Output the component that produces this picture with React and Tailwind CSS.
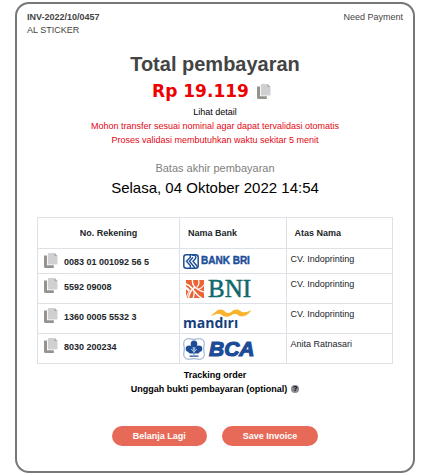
import React from "react";

function CopyIcon() {
  return (
    <svg viewBox="0 0 14 15" className="block h-[15px] w-[14px]" aria-hidden="true">
      <path d="M0 2.500h3v9.800H9.800V15H1.500A1.500 1.500 0 0 1 0 13.500z" fill="#96938e" />
      <path d="M4.800 0H10.500L13.500 3v7.500a1 1 0 0 1-1 1H4.800a1 1 0 0 1-1-1V1a1 1 0 0 1 1-1z" fill="#d0d0d3" />
      <path d="M10.500 0v3h3z" fill="#a9a9ad" />
    </svg>
  );
}

function BriLogo() {
  return (
    <span className="flex items-center gap-[2px] pl-[3px] text-[#1d4f98]">
      <svg viewBox="0 0 16 15" className="h-[15px] w-4" fill="none" stroke="#1d4f98" aria-hidden="true">
        <rect x="0.8" y="0.8" width="14.400" height="13.400" rx="2.500" strokeWidth="1.500" />
        <path d="M7.300 1v2.200L3.500 7.300l3.800 4.200V14" strokeWidth="1.400" />
        <path d="M10 3.300 6.500 7.300 12 14" strokeWidth="1.400" />
        <path d="M9 1c4 0 4.300 2 3.500 3.500L10 7.300l4.500 5.500" strokeWidth="1.400" />
      </svg>
      <span className="text-[10px] leading-4 font-bold whitespace-nowrap [-webkit-text-stroke:0.4px_#1d4f98]">
        BANK BRI
      </span>
    </span>
  );
}

function BniLogo() {
  return (
    <span className="flex items-center gap-[3px] pl-[5px]">
      <svg viewBox="0 0 20 18" className="h-[18px] w-5" aria-hidden="true">
        <path d="M1 0h18v18H1z" fill="#ea6437" />
        <g fill="none" stroke="#fff" strokeLinecap="round">
          <path d="M.5 4C4 4.500 5.500 6.500 7.500 9s4.500 6.500 9.500 9.500" strokeWidth="1.500" />
          <path d="M7.500 0C7 4 9.500 7.500 13 9.500s5 2.500 6.500 2.500" strokeWidth="1.400" />
          <path d="M9.500 7.500C7 9 4.500 12 3.500 18" strokeWidth="1.500" />
          <path d="M13.500 0c1 2.500.5 5-1.500 7" strokeWidth="1.200" />
          <path d="M9 11.500c.5 2.500 0 4.500-1 6.500" strokeWidth="1.200" />
          <path d="M13 9c2 .3 4-1.500 6-4" strokeWidth="1.200" />
        </g>
        <path d="M0 6c2.500 1 4 2.500 5 4.500-1.500 2-2.500 4.500-3 7.500H0z" fill="#fff" />
        <path d="M1 9.500c1.200.5 2 1.200 2.500 2.200C2.500 13 1.500 15 1 17z" fill="#ea6437" />
      </svg>
      <span className="font-['Liberation_Serif',serif] text-[25px] leading-[22px] text-[#10696c] [-webkit-text-stroke:0.5px_#10696c]">
        BNI
      </span>
    </span>
  );
}

function MandiriLogo() {
  return (
    <span className="flex flex-col pl-[3px]">
      <svg viewBox="0 0 42 8" className="ml-[27px] h-2 w-[42px]" aria-hidden="true">
        <path
          d="M0 6.500C4 5.500 6 .5 10.500.5c4 0 4.500 3.500 7.500 3.500 3.500 0 4.500-3.500 8.500-3.500 4 0 4 2.800 7.500 2.800 2.500 0 4.500-1 7.500-2.300C39 4.500 36 7.300 32 7.300c-4 0-4-2.300-7-2.300-3.500 0-4.500 2.800-8.500 2.800-4.500 0-4.500-3-8-3C5.500 4.800 3.500 7 0 6.500z"
          fill="#f8b42c"
        />
      </svg>
      <span className="font-['Open_Sans','Noto_Sans',sans-serif] text-[14px] leading-3 font-bold text-[#173f7e]">
        mandırı
      </span>
    </span>
  );
}

function BcaLogo() {
  return (
    <span className="flex items-center gap-1 pl-[3px]">
      <svg viewBox="0 0 22 22" className="h-[22px] w-[22px]" aria-hidden="true">
        <path
          d="M5.500.7Q11 2 16.500.7q4.500 0 4.800 4.800Q20 11 21.300 16.500q-.3 4.500-4.800 4.800Q11 20 5.500 21.300 1 21 .7 16.500 2 11 .7 5.500 1 .7 5.500.7z"
          fill="#fff"
          stroke="#7d9ac6"
          strokeWidth="0.9"
        />
        <g fill="#1c4c98">
          <ellipse cx="11" cy="6" rx="3.300" ry="3.500" />
          <ellipse cx="6.300" cy="10.800" rx="3.600" ry="3.200" />
          <ellipse cx="15.700" cy="10.800" rx="3.600" ry="3.200" />
          <ellipse cx="8.300" cy="13.800" rx="3" ry="1.800" />
          <ellipse cx="13.700" cy="13.800" rx="3" ry="1.800" />
          <path d="M10.400 8h1.200v8.500h-1.200zM6.500 17.500h9v1.200h-9z" />
        </g>
        <path d="M11 9v6M8 11l3 3 3-3" fill="none" stroke="#fff" strokeWidth="0.6" />
      </svg>
      <span className="text-[21px] leading-[22px] font-bold text-[#1c4c98] italic [-webkit-text-stroke:1.2px_#1c4c98]">
        BCA
      </span>
    </span>
  );
}

const accounts = [
  { number: "0083 01 001092 56 5", Logo: BriLogo, bank: "Bank BRI", owner: "CV. Indoprinting", height: "h-[25px]" },
  { number: "5592 09008", Logo: BniLogo, bank: "BNI", owner: "CV. Indoprinting", height: "h-[30px]" },
  { number: "1360 0005 5532 3", Logo: MandiriLogo, bank: "Mandiri", owner: "CV. Indoprinting", height: "h-[30px]" },
  { number: "8030 200234", Logo: BcaLogo, bank: "BCA", owner: "Anita Ratnasari", height: "h-[30px]" },
];

function AccountTable() {
  return (
    <table className="w-full table-fixed border-collapse text-left text-[#212529]">
      <colgroup>
        <col className="w-[40%]" />
        <col className="w-[30%]" />
        <col className="w-[30%]" />
      </colgroup>
      <thead>
        <tr className="h-[31px]">
          <th className="border border-[#dee2e6] p-0 text-center">No. Rekening</th>
          <th className="border border-[#dee2e6] py-0 pr-0 pl-2">Nama Bank</th>
          <th className="border border-[#dee2e6] py-0 pr-0 pl-2">Atas Nama</th>
        </tr>
      </thead>
      <tbody>
        {accounts.map(({ number, Logo, bank, owner, height }) => (
          <tr key={number} className={height}>
            <td className="border border-[#dee2e6] py-0 pr-0 pl-[6px] align-top font-bold">
              <div className="flex gap-[6px] pt-[2px]">
                <button type="button" aria-label={`Salin ${number}`}>
                  <CopyIcon />
                </button>
                <span className="pt-1">{number}</span>
              </div>
            </td>
            <td className="border border-[#dee2e6] p-0" aria-label={bank}>
              <Logo />
            </td>
            <td className="border border-[#dee2e6] py-0 pr-0 pl-1 align-top">
              <div className="pt-[3px]">{owner}</div>
            </td>
          </tr>
        ))}
      </tbody>
    </table>
  );
}

export default function App() {
  return (
    <main className="bg-white px-[15px] pt-[2px] pb-[2px] font-['Liberation_Sans',Arial,sans-serif] text-[9px] leading-[14px] text-black">
      <section className="rounded-[14px] border-2 border-[#777] pt-[7px] pb-[25px]">
        <header className="flex justify-between px-[10px] leading-[13px] text-[#444]">
          <div>
            <div className="font-bold">INV-2022/10/0457</div>
            <div>AL STICKER</div>
          </div>
          <div>Need Payment</div>
        </header>

        <div className="mt-[13px] text-center">
          <h1 className="text-[20px] leading-7 font-bold text-[#444]">Total pembayaran</h1>
          <div className="flex items-center justify-center gap-2 pr-[7px]">
            <span className="font-['DejaVu_Sans',Verdana,sans-serif] text-[17px] leading-[27px] font-bold text-[#ee0000]">
              Rp 19.119
            </span>
            <button type="button" aria-label="Salin total">
              <CopyIcon />
            </button>
          </div>
          <a href="#detail" className="block">Lihat detail</a>
          <p className="text-[#e30613]">Mohon transfer sesuai nominal agar dapat tervalidasi otomatis</p>
          <p className="text-[#e30613]">Proses validasi membutuhkan waktu sekitar 5 menit</p>
          <p className="mt-[13px] text-[11px] leading-4 text-[#808080]">Batas akhir pembayaran</p>
          <p className="mt-[2px] text-[15px] leading-5">Selasa, 04 Oktober 2022 14:54</p>
        </div>

        <div className="mt-[19px] px-5">
          <AccountTable />
        </div>

        <div className="mt-1 flex flex-col items-center font-bold">
          <a href="#tracking">Tracking order</a>
          <div className="flex items-center gap-1">
            <a href="#upload">Unggah bukti pembayaran (optional)</a>
            <button
              type="button"
              aria-label="Bantuan"
              className="flex h-2 w-2 items-center justify-center rounded-full bg-[#8a8a8e] text-[8px] leading-2 font-bold text-black"
            >
              ?
            </button>
          </div>
        </div>

        <div className="mt-[30px] flex justify-center gap-[15px]">
          <button type="button" className="h-5 rounded-full bg-[#e76a58] px-[21px] font-bold text-white">
            Belanja Lagi
          </button>
          <button type="button" className="h-5 rounded-full bg-[#e76a58] px-[21px] font-bold text-white">
            Save Invoice
          </button>
        </div>
      </section>
    </main>
  );
}
